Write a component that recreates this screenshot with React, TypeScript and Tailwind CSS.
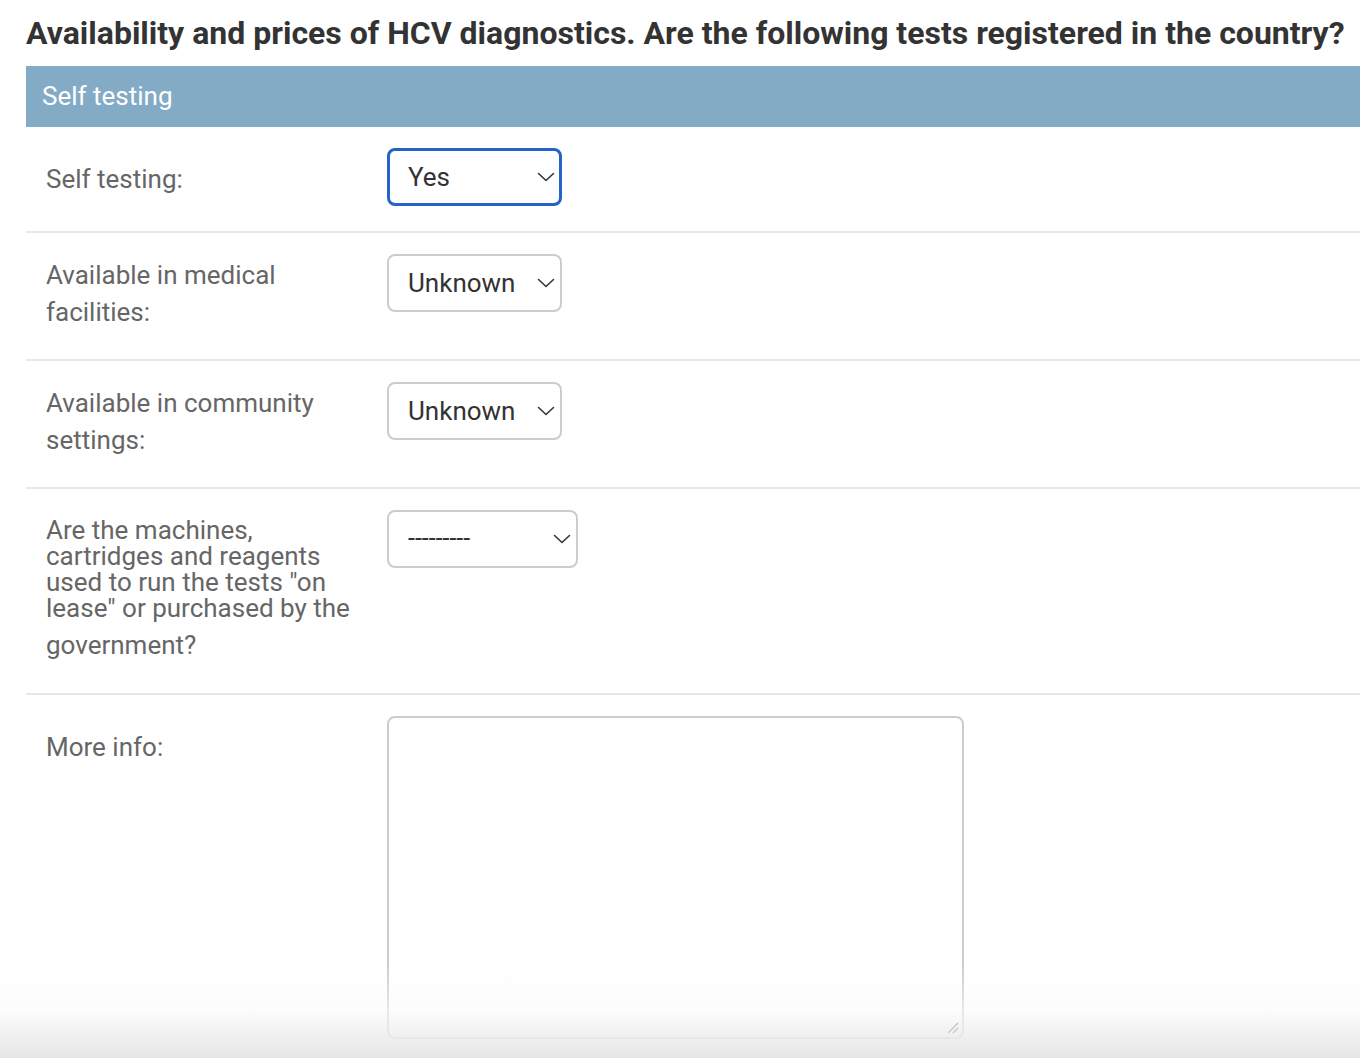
import React from "react";

/* =======================
   PIECES
======================= */

const Chevron = () => (
  <svg width="18" height="10" viewBox="0 0 18 10" fill="none">
    <path d="M1.5 1.5 L9 8.5 L16.5 1.5" stroke="#333" strokeWidth="1.6" strokeLinecap="round" strokeLinejoin="round" />
  </svg>
);

type SelectProps = {
  value: string;
  width: string;
  focused?: boolean;
  small?: boolean;
};

const FakeSelect = ({ value, width, focused, small }: SelectProps) => (
  <div
    className={`${width} h-[58px] flex items-center justify-between rounded-[8px] bg-white ${
      focused ? "border-[3px] border-[#2463c9] pl-[18px] pr-[4px]" : "border-2 border-[#cccccc] pl-[19px] pr-[5px]"
    }`}
  >
    <span className={small ? "text-[25px] text-[#333]" : "text-[26px] text-[#333]"}>{value}</span>
    <Chevron />
  </div>
);

const Row = ({ children, last }: { children: React.ReactNode; last?: boolean }) => (
  <div className={`flex pl-[20px] pt-[21px] pb-[25px] ${last ? "" : "border-b-2 border-[#e8e8e8]"}`}>
    {children}
  </div>
);

const Label = ({ children }: { children: React.ReactNode }) => (
  <div className="w-[341px] shrink-0 pt-[3px] pb-[3px] pr-[10px] text-[26px] leading-[37px] text-[#666] whitespace-nowrap">
    {children}
  </div>
);

/* =======================
   PAGE
======================= */

export default function App() {
  return (
    <div
      className="relative h-[1058px] overflow-hidden bg-white"
      style={{ fontFamily: "Roboto, 'Liberation Sans', sans-serif" }}
    >
      <div className="pl-[26px]">
        <h2 className="pt-[9px] h-[66px] text-[32px] font-bold text-[#333] whitespace-nowrap">
          Availability and prices of HCV diagnostics. Are the following tests registered in the country?
        </h2>

        <div className="h-[61px] flex items-center pl-[16px] bg-[#83abc6] text-white text-[26px]">
          Self testing
        </div>

        <Row>
          <Label>
            <div className="pt-[10px]">Self testing:</div>
          </Label>
          <FakeSelect value="Yes" width="w-[175px]" focused />
        </Row>

        <Row>
          <Label>
            Available in medical
            <br />
            facilities:
          </Label>
          <FakeSelect value="Unknown" width="w-[175px]" />
        </Row>

        <Row>
          <Label>
            Available in community
            <br />
            settings:
          </Label>
          <FakeSelect value="Unknown" width="w-[175px]" />
        </Row>

        <Row>
          <Label>
            <div className="leading-[26px] pt-[4px]">
              Are the machines,
              <br />
              cartridges and reagents
              <br />
              used to run the tests "on
              <br />
              lease" or purchased by the
            </div>
            <div className="mt-[6px] mb-[1px]">government?</div>
          </Label>
          <FakeSelect value="---------" width="w-[191px]" small />
        </Row>

        <Row last>
          <Label>
            <div className="pt-[10px]">More info:</div>
          </Label>
          <div className="relative w-[577px] h-[323px] rounded-[8px] border-2 border-[#cccccc] bg-white">
            <svg className="absolute right-[3px] bottom-[3px]" width="12" height="12" viewBox="0 0 12 12">
              <path d="M1 11 L11 1 M6 11 L11 6" stroke="#444" strokeWidth="1.3" />
            </svg>
          </div>
        </Row>
      </div>

      {/* bottom fade */}
      <div className="pointer-events-none absolute left-0 right-0 bottom-0 h-[95px] bg-gradient-to-b from-white/0 via-[#fafafa]/60 to-[#e6e6e6]" />
    </div>
  );
}
